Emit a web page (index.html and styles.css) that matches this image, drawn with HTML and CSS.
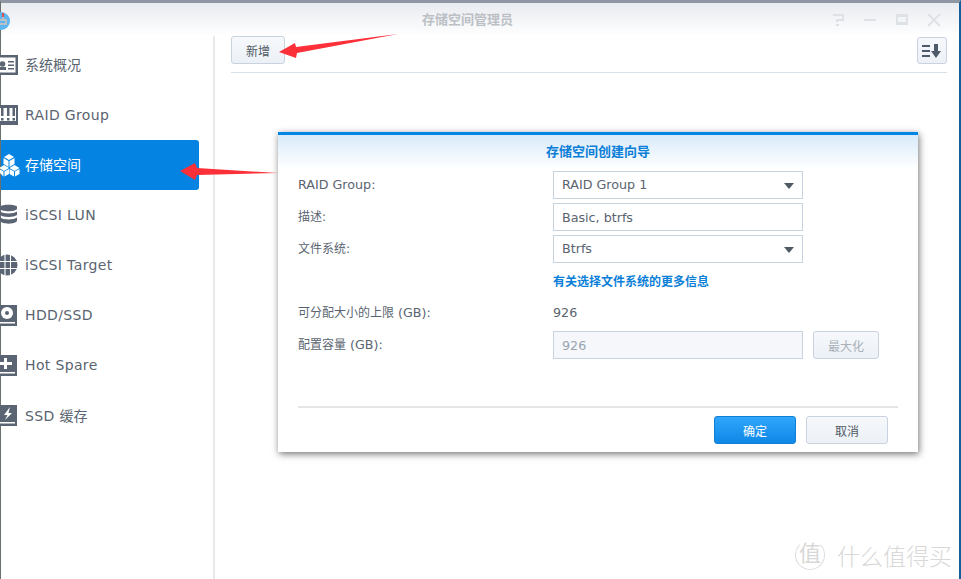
FILE: index.html
```html
<!DOCTYPE html>
<html lang="zh-CN">

<head>
    <meta charset="UTF-8">
    <title>存储空间管理员</title>
    <link rel="stylesheet" href="styles.css">
</head>

<body>
    <div class="window">
        <header class="titlebar">
            <svg class="app-icon" width="11" height="22" viewBox="0 0 11 22">
                <circle cx="1" cy="12" r="9" fill="#5cb5ee" />
                <path d="M2 4h2v6h3v6H-1v-2h6v-2H-1v-2h3z" fill="#b9c0c6" />
                <path d="M2 4h2v4H2z" fill="#d9534f" />
            </svg>
            <div class="title">存储空间管理员</div>
            <div class="win-controls">
                <svg width="14" height="14" viewBox="0 0 14 14">
                    <path d="M2 2h10v5H6v2" fill="none" stroke="#dfe2e5" stroke-width="2" />
                    <path d="M5 11h3v2H5z" fill="#dfe2e5" />
                </svg>
                <svg width="14" height="14" viewBox="0 0 14 14">
                    <path d="M1 7h12" stroke="#dfe2e5" stroke-width="2" />
                </svg>
                <svg width="14" height="14" viewBox="0 0 14 14">
                    <path d="M1 1h12v11H1z" fill="#dfe2e5" />
                    <path d="M3 4h8v5H3z" fill="#f3f4f6" />
                </svg>
                <svg width="14" height="14" viewBox="0 0 14 14">
                    <path d="M1 1l12 12M13 1L1 13" stroke="#dfe2e5" stroke-width="2" />
                </svg>
            </div>
        </header>

        <div class="body-row">
            <nav class="sidebar">
                <a class="nav-item">
                    <svg class="nav-icon" viewBox="0 0 18 20">
                        <path d="M0 0h18v20H0z" fill="#5a6472" />
                        <path d="M0 2.500h15.500v15H0z" fill="#fff" />
                        <circle cx="2.500" cy="9" r="2.800" fill="#5a6472" />
                        <path d="M0 12h6v3H0zM8 6h6v1.500H8zM8 9.500h6V11H8zM8 13h6v1.500H8z" fill="#5a6472" />
                    </svg>
                    <span class="zh-label">系统概况</span>
                </a>
                <a class="nav-item">
                    <svg class="nav-icon" viewBox="0 0 18 20">
                        <path d="M0 0h18v20H0z" fill="#5a6472" />
                        <path d="M0 3h16v13H0z" fill="#fff" />
                        <path d="M1 3h2.500v8H1zM7 3h2.500v8H7zM12.500 3H15v8h-2.500zM1 13h2.500v2.500H1zM7 13h2.500v2.500H7zM12.500 13H15v2.500h-2.500z" fill="#5a6472" />
                    </svg>
                    <span>RAID Group</span>
                </a>
                <a class="nav-item active">
                    <svg class="nav-icon cube-icon" viewBox="0 0 20 24">
                        <path d="M9 1l5 3-5 3-5-3zM3.500 5l5 3v6l-5-3zM14.500 5v6l-5 3V8z" fill="#fff" />
                        <path d="M4 12l5 3-5 3-5-3zM-1 19v-3l4.500 2.500v5zM9 16v5l-4.500 2.500v-5z" fill="#fff" />
                        <path d="M14.500 12l5 3-5 3-5-3zM9.500 16l4.500 2.500v5L9.500 21zM19.500 16v5L15 23.500v-5z" fill="#fff" />
                    </svg>
                    <span class="zh-label">存储空间</span>
                </a>
                <a class="nav-item">
                    <svg class="nav-icon" viewBox="0 0 18 22">
                        <path d="M0 2.500C2 0 15 0 17 2.500V5C15 8 2 8 0 5zM0 7.500c3 2.500 14 2.500 17 0V11c-3 2.500-14 2.500-17 0zM0 13.500c3 2.500 14 2.500 17 0V17c-2 3.500-15 3.500-17 0z" fill="#5a6472" />
                    </svg>
                    <span>iSCSI LUN</span>
                </a>
                <a class="nav-item">
                    <svg class="nav-icon" viewBox="0 0 18 22">
                        <circle cx="7" cy="11" r="10.500" fill="#5a6472" />
                        <path d="M-4 7.500h22M-4 14.500h22M5 0v22M10.500 0v22" stroke="#fff" stroke-width="1.100" fill="none" />
                    </svg>
                    <span>iSCSI Target</span>
                </a>
                <a class="nav-item">
                    <svg class="nav-icon" viewBox="0 0 18 22">
                        <path d="M0 1h17v21H0z" fill="#5a6472" />
                        <circle cx="7" cy="9" r="6" fill="#fff" />
                        <circle cx="7" cy="9" r="2" fill="#5a6472" />
                        <path d="M0 18h15v1.500H0z" fill="#fff" />
                    </svg>
                    <span>HDD/SSD</span>
                </a>
                <a class="nav-item">
                    <svg class="nav-icon" viewBox="0 0 18 22">
                        <path d="M0 1h17v21H0z" fill="#5a6472" />
                        <path d="M4 4h3v4h5v3H7v4H4v-4H0V8h4z" fill="#fff" />
                        <path d="M0 18h15v1.500H0z" fill="#fff" />
                    </svg>
                    <span>Hot Spare</span>
                </a>
                <a class="nav-item">
                    <svg class="nav-icon" viewBox="0 0 18 22">
                        <path d="M0 1h17v21H0z" fill="#5a6472" />
                        <path d="M10 3L4 11h3.500L5 16l7-7H8.500z" fill="#fff" />
                        <path d="M0 18h15v1.500H0z" fill="#fff" />
                    </svg>
                    <span>SSD <span class="zh">缓存</span></span>
                </a>
            </nav>

            <main class="content">
                <div class="toolbar">
                    <button class="btn add-btn">新增</button>
                    <button class="btn sort-btn">
                        <svg width="20" height="14" viewBox="0 0 20 14">
                            <path d="M0 1h8v2H0zM0 6h8v2H0zM0 11h8v2H0z" fill="#4f5a68" />
                            <path d="M12 0h4v7h3l-5 7-5-7h3z" fill="#4f5a68" />
                        </svg>
                    </button>
                </div>
            </main>
        </div>
    </div>

    <section class="dialog">
        <h2 class="dialog-title">存储空间创建向导</h2>
        <div class="form">
            <label>RAID Group:</label>
            <div class="field select">RAID Group 1</div>
            <label class="zh">描述:</label>
            <div class="field">Basic, btrfs</div>
            <label class="zh">文件系统:</label>
            <div class="field select">Btrfs</div>
            <span></span>
            <a class="link">有关选择文件系统的更多信息</a>
            <label><span class="zh">可分配大小的上限</span> (GB):</label>
            <div class="value">926</div>
            <label><span class="zh">配置容量</span> (GB):</label>
            <div class="field-row">
                <div class="field disabled">926</div>
                <button class="btn max-btn">最大化</button>
            </div>
        </div>
        <div class="dialog-footer">
            <button class="btn primary">确定</button>
            <button class="btn cancel">取消</button>
        </div>
    </section>

    <!-- red annotation arrows -->
    <svg class="arrow arrow-add" width="125" height="30" viewBox="0 0 125 30">
        <path d="M1 20L17 11l1 4L120 2 19 21l-1 5z" fill="#fb3038" />
    </svg>
    <svg class="arrow arrow-nav" width="100" height="18" viewBox="0 0 100 18">
        <path d="M0 8L15 0l2 5 81 5-81 2-2 5z" fill="#fb3038" />
    </svg>

    <div class="watermark">
        <span class="wm-badge">值</span>
        <span class="wm-text">什么值得买</span>
    </div>
</body>

</html>
```

FILE: styles.css
```css
* {
    box-sizing: border-box;
}

html,
body {
    height: 100%;
    margin: 0;
    overflow: hidden;
    background: #fff;
}

body {
    font-family: "DejaVu Sans", "Noto Sans CJK SC", sans-serif;
    font-size: 12.7px;
    color: #5a6470;
}

.zh {
    font-size: 12px;
    letter-spacing: 0;
}

.window {
    display: flex;
    flex-direction: column;
    height: 100%;
    border-top: 3px solid #8e97a3;
    border-left: 1px solid #69716f;
    border-right: 2px solid #14609c;
}

.titlebar {
    display: flex;
    align-items: center;
    height: 33px;
    flex-shrink: 0;
    background: linear-gradient(#e8ebf0, #fff);
}

.app-icon {
    margin-left: -1px;
    flex-shrink: 0;
}

.title {
    flex: 1;
    padding: 0 0 2px 93px;
    text-align: center;
    font-size: 13px;
    font-weight: bold;
    color: #bcc0c5;
}

.win-controls {
    display: flex;
    gap: 18px;
    padding-right: 18px;
}

.body-row {
    display: flex;
    flex: 1;
}

.sidebar {
    width: 214px;
    padding: 4px 14px 0 0;
    border-right: 2px solid #e9e9e9;
}

.nav-item {
    display: flex;
    align-items: center;
    gap: 7px;
    height: 50px;
    font-size: 14px;
    letter-spacing: 0.35px;
    color: #5a6470;
}

.nav-item .zh {
    font-size: 14px;
}

.zh-label {
    margin-bottom: 2px;
    letter-spacing: 0;
}

.nav-item.active {
    background: #0483e3;
    border-radius: 0 3px 3px 0;
    color: #fff;
}

.nav-icon {
    width: 18px;
    height: 22px;
    margin-left: -1px;
    flex-shrink: 0;
    overflow: visible;
}

.cube-icon {
    width: 20px;
    height: 24px;
    margin-right: -2px;
}

.content {
    flex: 1;
    padding: 0 12px 0 16px;
}

.toolbar {
    display: flex;
    justify-content: space-between;
    height: 37px;
    border-bottom: 1px solid #d7e1ea;
}

.btn {
    height: 28px;
    padding: 0;
    font-family: inherit;
    font-size: 12px;
    color: #505a64;
    background: linear-gradient(#f6f8fb, #ecf1f7);
    border: 1px solid #c8d3df;
    border-radius: 3px;
}

.add-btn {
    width: 54px;
}

.sort-btn {
    display: flex;
    align-items: center;
    justify-content: center;
    width: 30px;
    height: 27px;
    margin-top: 1px;
}

.dialog {
    position: absolute;
    left: 278px;
    top: 132px;
    width: 640px;
    height: 320px;
    padding: 0 20px;
    background: #fff linear-gradient(#d8eafa, #fff) no-repeat 0 0 / 100% 34px;
    border-top: 3px solid #0086e5;
    box-shadow: 1px 2px 7px rgba(0, 0, 0, 0.55);
}

.dialog-title {
    margin: 0;
    height: 34px;
    line-height: 34px;
    text-align: center;
    font-size: 13px;
    font-weight: bold;
    color: #0b7fd8;
}

.form {
    display: grid;
    grid-template-columns: 255px 1fr;
    grid-auto-rows: 32px;
    align-items: center;
    height: 239px;
    border-bottom: 2px solid #e5e5e5;
}

.form label {
    line-height: 28px;
}

.field {
    width: 250px;
    height: 28px;
    padding: 0 8px;
    line-height: 27px;
    background: #fff;
    border: 1px solid #c8d3df;
}

.select {
    position: relative;
    line-height: 26px;
}

.select::after {
    content: "";
    position: absolute;
    right: 8px;
    top: 11px;
    border-style: solid;
    border-width: 6px 5px 0;
    border-color: #505a64 transparent transparent;
    width: 0;
}

.link {
    margin-bottom: 2px;
    font-size: 12px;
    font-weight: bold;
    color: #0b7fd8;
}

.value {
    margin-bottom: 2px;
}

.field-row {
    display: flex;
    gap: 10px;
}

.disabled {
    color: #9aa4b0;
    background: #f5f7fa;
}

.max-btn {
    width: 66px;
    color: #a8b0b8;
}

.dialog-footer {
    display: flex;
    justify-content: flex-end;
    gap: 10px;
    padding: 8px 10px 0 0;
}

.primary,
.cancel {
    width: 82px;
}

.primary {
    color: #fff;
    background: linear-gradient(#30a6fb, #0f87e6);
    border-color: #0f7fd6;
}

.arrow {
    position: absolute;
}

.arrow-add {
    left: 278px;
    top: 32px;
}

.arrow-nav {
    left: 180px;
    top: 163px;
}

.watermark {
    position: absolute;
    left: 795px;
    top: 538px;
    display: flex;
    align-items: center;
    gap: 12px;
    color: #d8d8d8;
}

.wm-badge {
    width: 30px;
    height: 30px;
    line-height: 26px;
    text-align: center;
    font-size: 22px;
    border: 1px solid #dcdcdc;
    border-top-color: transparent;
    border-radius: 50%;
}

.wm-text {
    font-size: 23px;
    font-weight: 300;
}
```
